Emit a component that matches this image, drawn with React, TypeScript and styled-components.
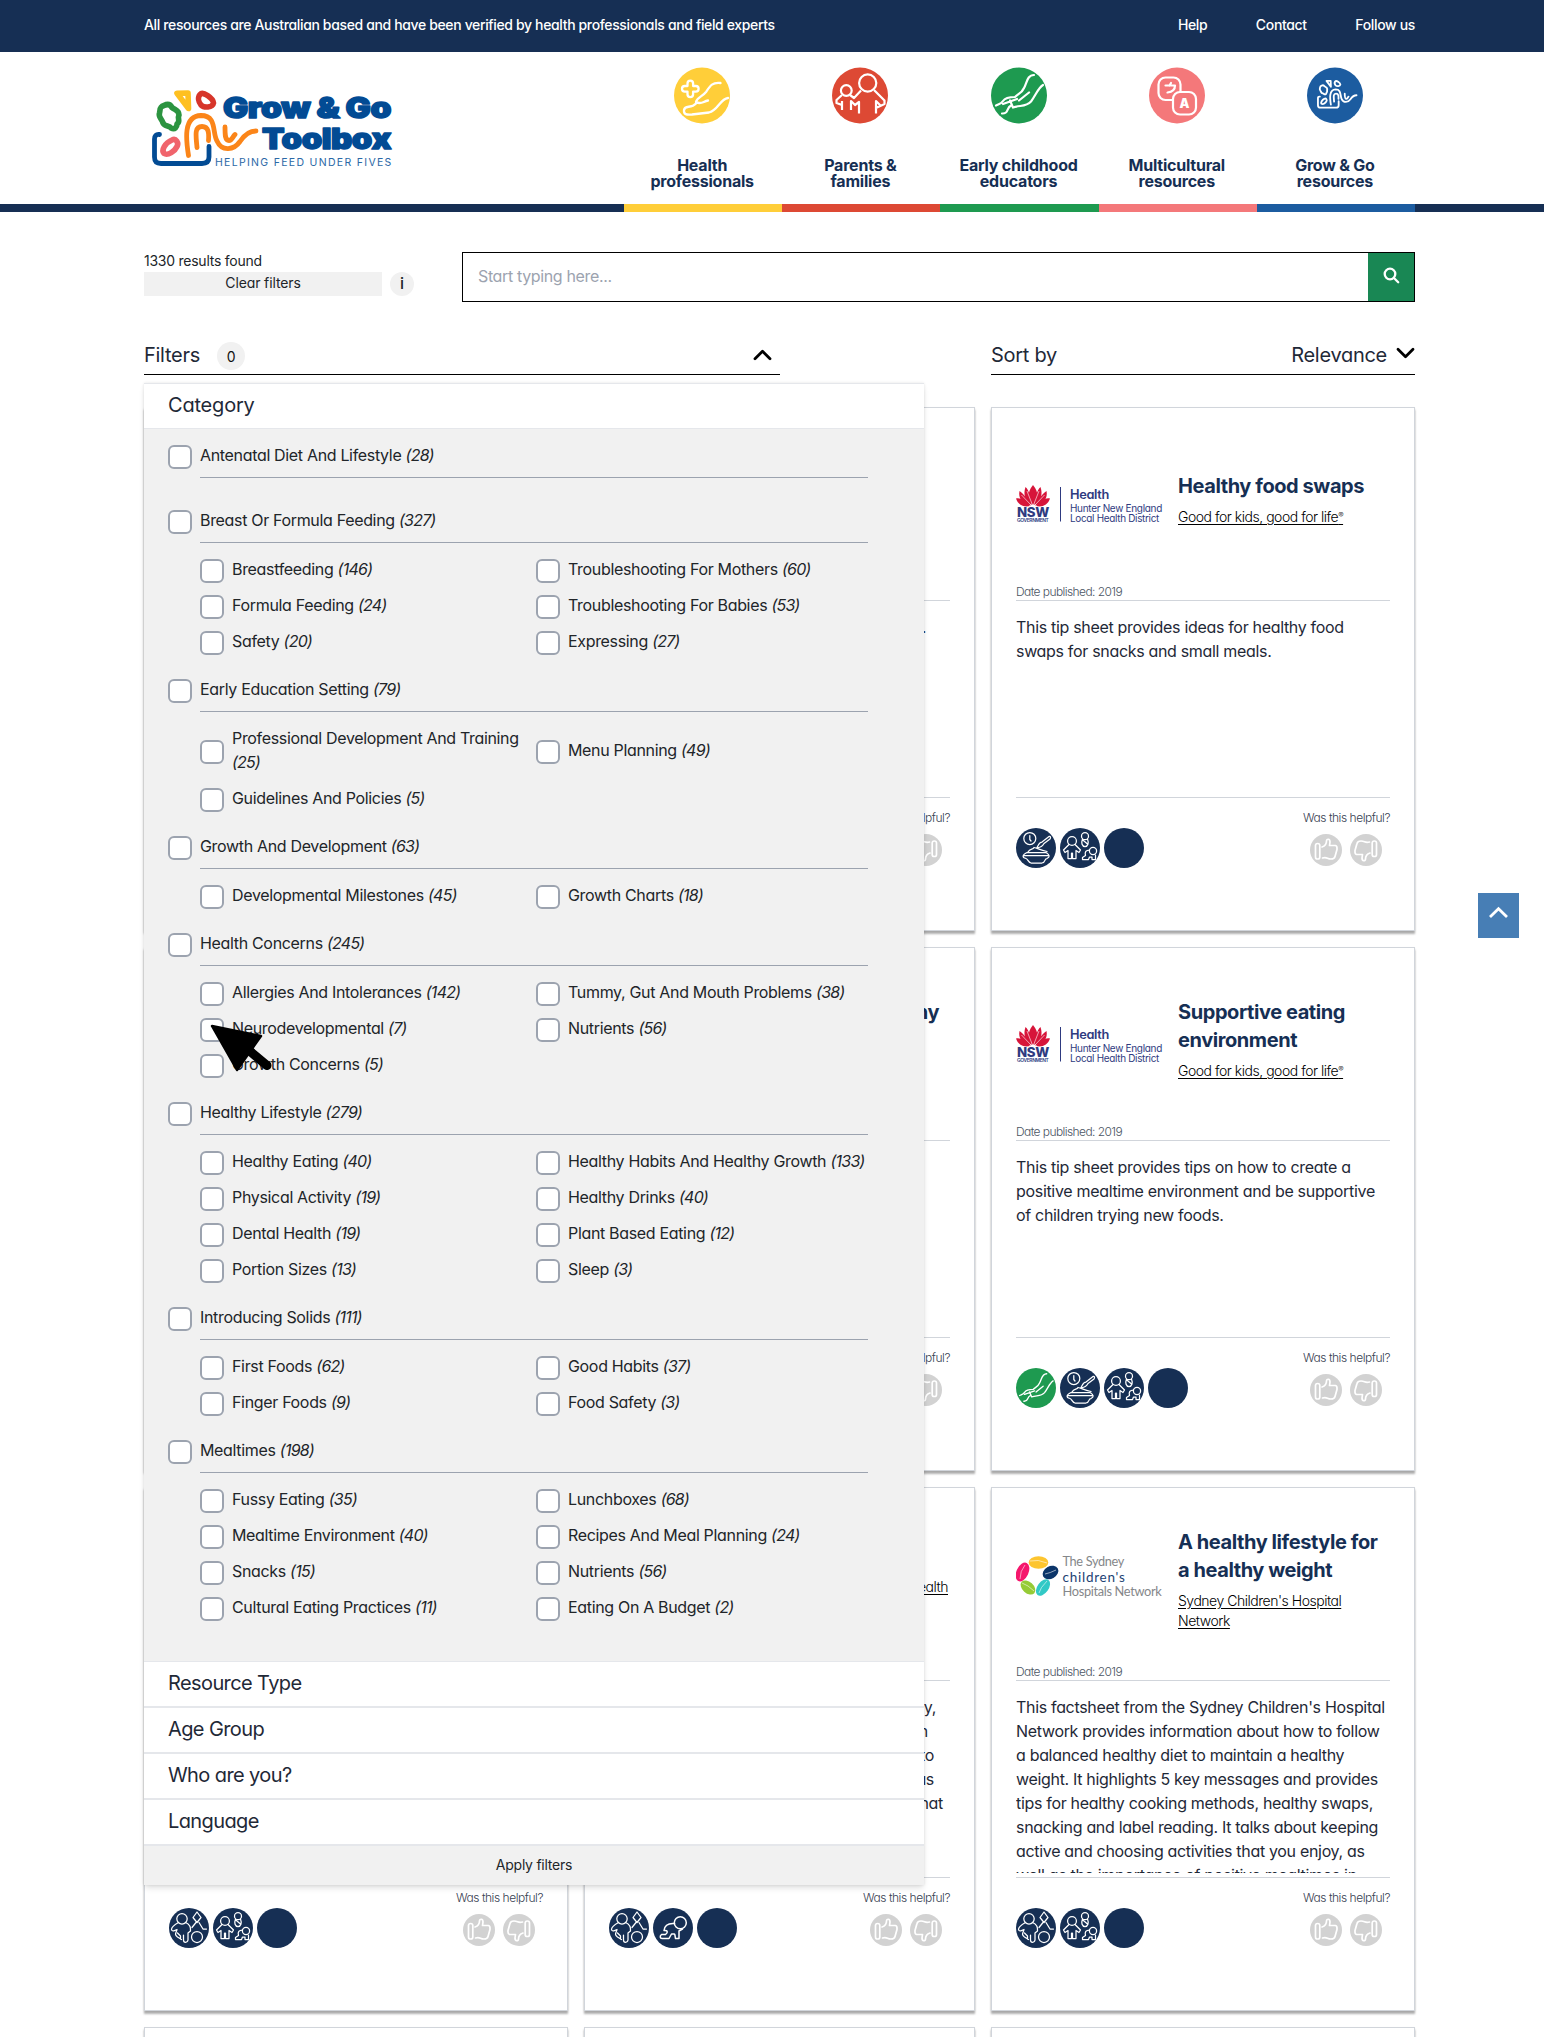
import React from "react";
import styled, { createGlobalStyle, css } from "styled-components";

const navy = "#162f54";
const grey = "#f1f1f1";
const rule = "#9ca3af";

const GlobalStyle = createGlobalStyle`
  *, *::before, *::after { box-sizing: border-box; }
  body { margin: 0; background: #fff; overflow: hidden; }
  button, input { font: inherit; letter-spacing: inherit; color: inherit; font-feature-settings: inherit; }
`;

const Page = styled.div`
  position: relative;
  width: 1544px;
  height: 2037px;
  overflow: hidden;
  background: #fff;
  color: #212529;
  font-family: Inter, "Liberation Sans", sans-serif;
  font-feature-settings: "cv11";
  font-size: 16px;
  line-height: 24px;
  letter-spacing: -0.33px;
`;

const Container = styled.div`
  width: 1271px;
  margin-left: 144px;
`;

/* ---------- top bar ---------- */
const TopBar = styled.div`
  height: 52px;
  background: ${navy};
  color: #fff;
  font-size: 14px;
  font-weight: 500;
`;
const TopBarInner = styled(Container)`
  display: flex;
  justify-content: space-between;
  align-items: center;
  height: 50px;
  letter-spacing: -0.36px;
`;
const TopLinks = styled.nav`
  display: flex;
  gap: 48.5px;
  letter-spacing: -0.34px;
`;

/* ---------- header ---------- */
const Header = styled.header`
  height: 160px;
  box-shadow: inset 0 -8px ${navy};
`;
const HeaderInner = styled(Container)`
  display: flex;
  justify-content: space-between;
  height: 160px;
`;
const LogoLink = styled.a`
  display: block;
  padding: 36px 0 0 6px;
`;
const Nav = styled.nav`
  display: grid;
  grid-template-columns: repeat(5, 158.2px);
`;
const NavItem = styled.a<{ $color: string }>`
  display: flex;
  flex-direction: column;
  align-items: center;
  gap: 33px;
  padding: 15px 2px 0 0;
  border-bottom: 8px solid ${(p) => p.$color};
  color: ${navy};
  font-size: 16px;
  font-weight: 700;
  line-height: 16px;
  letter-spacing: -0.22px;
  text-align: center;
  font-feature-settings: normal;
`;

/* ---------- search ---------- */
const SearchRow = styled.div`
  display: flex;
  justify-content: space-between;
  padding-top: 40px;
  height: 90px;
`;
const Results = styled.div`
  width: 270px;
  font-size: 14px;
  line-height: 18px;
  letter-spacing: -0.25px;
`;
const ClearRow = styled.div`
  display: flex;
  gap: 8px;
  padding-top: 2px;
`;
const ClearButton = styled.button`
  width: 238px;
  height: 24px;
  padding: 0 0 2px;
  border: 0;
  background: ${grey};
  letter-spacing: -0.12px;
`;
const InfoDot = styled.span`
  width: 24px;
  height: 24px;
  border-radius: 50%;
  background: ${grey};
  text-align: center;
  font-size: 16px;
  font-weight: 500;
  line-height: 22px;
`;
const SearchBox = styled.div`
  display: flex;
  width: 953px;
  height: 50px;
  border: 1px solid #000;
`;
const SearchInput = styled.input`
  flex: 1;
  padding: 0 15px 3px;
  border: 0;
  outline: 0;
  background: #fff;
  &::placeholder { color: #9ca3af; opacity: 1; letter-spacing: -0.36px; }
`;
const SearchButton = styled.button`
  display: flex;
  justify-content: center;
  width: 46px;
  padding: 14px 0 0;
  border: 0;
  background: #198754;
`;

/* ---------- filter / sort bars ---------- */
const Bars = styled.div`
  display: flex;
  justify-content: space-between;
  padding-top: 38px;
  color: #1f2937;
  font-size: 20px;
  line-height: 30px;
  letter-spacing: -0.28px;
`;
const Bar = styled.div<{ $width: number }>`
  display: flex;
  align-items: flex-start;
  width: ${(p) => p.$width}px;
  height: 35px;
  border-bottom: 1px solid #000;
`;
const Count = styled.span`
  width: 28px;
  height: 28px;
  margin: 2px auto 0 17px;
  border-radius: 50%;
  background: ${grey};
  color: #111;
  font-size: 14px;
  line-height: 30px;
  text-align: center;
`;
const SortValue = styled.span`
  margin-left: auto;
`;
const Chevron = styled.svg<{ $top: number; $gap: number; $end?: number }>`
  width: 19px;
  height: 12px;
  margin: ${(p) => p.$top}px ${(p) => p.$end ?? 0}px 0 ${(p) => p.$gap}px;
`;

/* ---------- filter panel ---------- */
const Stage = styled.div`
  position: relative;
  padding-top: 32px;
`;
const Panel = styled.section`
  position: absolute;
  z-index: 2;
  top: 8px;
  left: 0;
  width: 780px;
  background: #fff;
  border-top: 1px solid #e5e7eb;
  box-shadow: 0 4px 6px -1px rgba(0, 0, 0, 0.12), 0 0 3px rgba(0, 0, 0, 0.1);
`;
const SectionTitle = styled.div<{ $open?: boolean }>`
  height: ${(p) => (p.$open ? 45 : 46)}px;
  padding-left: 24px;
  border-bottom: ${(p) => (p.$open ? 1 : 2)}px solid #e5e7eb;
  color: #1f2937;
  font-size: 20px;
  line-height: 43px;
  letter-spacing: ${(p) => (p.$open ? -0.2 : -0.6)}px;
`;
const Categories = styled.div`
  padding: 16px 56px 16px 24px;
  background: ${grey};
  border-bottom: 1px solid #e5e7eb;
`;
const Group = styled.div<{ $empty: boolean }>`
  padding-bottom: ${(p) => (p.$empty ? 16 : 12)}px;
`;
const GroupHead = styled.div`
  display: flex;
  gap: 8px;
  height: 33px;
  margin-bottom: 16px;
`;
const GroupLabel = styled.label`
  flex: 1;
  border-bottom: 1px solid ${rule};
  line-height: 20px;
`;
const Options = styled.div`
  display: grid;
  grid-template-columns: 336px 332px;
  margin-left: 32px;
`;
const Option = styled.label`
  display: flex;
  align-items: center;
  gap: 8px;
  padding-bottom: 12px;
`;
const OptionText = styled.span`
  margin: -2px 0 2px;
  max-width: 300px;
`;
const Box = styled.span`
  flex: none;
  width: 24px;
  height: 24px;
  border: 2px solid #9ca3af;
  border-radius: 6px;
  background: #fff;
`;
const Num = styled.em`
  letter-spacing: -0.75px;
`;
const ApplyButton = styled.button`
  display: block;
  width: 100%;
  height: 39px;
  padding: 0 0 1px;
  border: 0;
  background: ${grey};
  font-size: 14px;
  letter-spacing: -0.25px;
`;

/* ---------- cards ---------- */
const CardGrid = styled.div`
  display: grid;
  grid-template-columns: 424px 391px 424px;
  grid-auto-rows: 524px;
  gap: 16px;
`;
const Card = styled.article`
  display: flex;
  flex-direction: column;
  padding: 24px 24px 0;
  border: 1px solid #d1d5db;
  background: #fff;
  box-shadow: 0 3px 2px rgba(0, 0, 0, 0.3), 0 1px 2px rgba(0, 0, 0, 0.08);
`;
const CardHead = styled.div`
  display: flex;
  align-items: center;
  gap: 16px;
  height: 135px;
`;
const LogoSlot = styled.div<{ $drop: number }>`
  flex: none;
  width: 146px;
  padding-top: ${(p) => p.$drop}px;
`;
const TitleBlock = styled.div<{ $tail?: boolean }>`
  flex: 1;
  white-space: pre-line;
  ${(p) =>
    p.$tail &&
    css`
      text-align: right;
    `}
`;
const CardTitle = styled.h3<{ $end?: number }>`
  margin: 0 ${(p) => p.$end ?? 0}px 7px 0;
  min-height: 28px;
  color: ${navy};
  font-size: 20px;
  font-weight: 700;
  line-height: 28px;
  letter-spacing: -0.42px;
  font-feature-settings: normal;
`;
const Org = styled.a<{ $end?: number; $tall?: boolean }>`
  display: block;
  margin-right: ${(p) => p.$end ?? 0}px;
  min-height: ${(p) => (p.$tall ? 40 : 20)}px;
  color: #000;
  font-size: 14px;
  font-weight: 300;
  line-height: 20px;
  letter-spacing: -0.48px;
  text-decoration: underline;
  text-underline-offset: 2px;
`;
const Registered = styled.span`
  font-size: 8px;
  line-height: 0;
  vertical-align: 4px;
`;
const Published = styled.div`
  height: 34px;
  padding-top: 15px;
  border-bottom: 1px solid #d1d5db;
  color: #4b5563;
  font-size: 12px;
  font-weight: 300;
  line-height: 19px;
  letter-spacing: -0.58px;
`;
const Description = styled.div`
  height: 192px;
  margin-bottom: 4px;
  padding-top: 14px;
  overflow: hidden;
  color: #1f2937;
  letter-spacing: -0.32px;
  white-space: pre-line;
`;
const TailLine = styled.div<{ $end: number }>`
  height: 24px;
  padding-right: ${(p) => p.$end}px;
  text-align: right;
`;
const CardFoot = styled.div`
  display: flex;
  justify-content: space-between;
  border-top: 1px solid #d1d5db;
`;
const Audience = styled.div`
  display: flex;
  gap: 4px;
  padding-top: 30px;
`;
const Helpful = styled.div`
  padding-top: 10px;
  color: #374151;
  font-size: 12px;
  font-weight: 300;
  line-height: 20px;
  letter-spacing: -0.46px;
`;
const Votes = styled.div`
  display: flex;
  justify-content: flex-end;
  gap: 8px;
  padding: 6px 8px 0 0;
`;
const Glyph = styled.svg`
  display: block;
  fill: none;
  stroke: #fff;
  stroke-linecap: round;
  stroke-linejoin: round;
`;

/* ---------- overlays ---------- */
const ToTop = styled.button`
  position: absolute;
  top: 893px;
  left: 1478px;
  display: flex;
  justify-content: center;
  width: 41px;
  height: 45px;
  padding: 13px 0 0;
  border: 0;
  background: #477eb5;
`;
const Cursor = styled.svg`
  position: absolute;
  z-index: 3;
  top: 1023px;
  left: 209px;
`;

/* ---------- drawings ---------- */
type MarkColors = { green: string; yellow: string; red: string; pink: string; blue: string; orange: string };
const brand: MarkColors = { green: "#2c9440", yellow: "#fec021", red: "#d7352a", pink: "#f0646c", blue: "#024b94", orange: "#fb8519" };
const white: MarkColors = { green: "#fff", yellow: "#fff", red: "#fff", pink: "#fff", blue: "#fff", orange: "#fff" };

const Mark = ({ c, w, thin }: { c: MarkColors; w: number; thin: number }) => (
  <g fill="none" strokeWidth={w} strokeLinecap="round" strokeLinejoin="round">
    <path stroke={c.green} d="M12 15.500C7 17 8.500 20 7.500 23C6 27 10 29 11 33C13 37 17 35 19 38C23 40 25 37 25 34C29 31 25 29 27 25C27 20 23 20 20 17.500C18 14 15 14 12 15.500Z" />
    <path stroke={c.yellow} d="M25 3.200L36 3L36.500 18.500Z" />
    <path stroke={c.red} d="M48 4.500C51 1 61 8 61.500 13C60.500 18 52 18 49 15C46.500 12 45.500 7.500 48 4.500Z" />
    <path stroke={c.pink} d="M20 50C24 48 27 53 25 56.500C23 61 16 66 12 63.500C9 60 13 53 20 50Z" />
    <path stroke={c.blue} strokeWidth={thin} d="M7.500 44.500C4 44 2.500 46 2.500 49V67C2.500 72 5 73.500 9 73.500H50C55 73.500 57 71 57 67V56.500" />
    <path stroke={c.orange} strokeWidth={thin} d="M36.500 65.500C34 50 31 26 49 25.500C65 25.500 60 42 65 51C70 62 82 60 88 51.500C93 44 98 41 104 41M45 57.500C44 46 42 36.500 50 36.500C57 36.500 57 44 56.500 50.500M73 37C73 45 73 50.500 77 50.500C80 50.500 80.500 47 83 44.500" />
  </g>
);

const SiteLogo = () => (
  <svg width="245" height="80" viewBox="0 0 245 80">
    <g transform="translate(2 2)"><Mark c={brand} w={5.6} thin={4.8} /></g>
    <g fill={brand.blue} stroke={brand.blue} strokeLinejoin="round" strokeWidth="1.500" fontFamily="Inter" fontWeight="900" fontSize="28">
      <text x="73" y="30" textLength="168" lengthAdjust="spacingAndGlyphs">Grow &amp; Go</text>
      <text x="112" y="61" textLength="129" lengthAdjust="spacingAndGlyphs">Toolbox</text>
    </g>
    <text x="65" y="78" fill="#2b68a6" fontFamily="Inter" fontSize="10.500" textLength="176">HELPING FEED UNDER FIVES</text>
  </svg>
);

const HandsLines = () => (
  <path d="M43 8C36 8 36 16 33 21C31 26 27 27 24 30C18 30 14 31 12 34C10 37 8 37 5 38.500M52 18C47 21 45 28 40 34.500C35 40 29 38 22 40.500L19 33.500M38 25.500L28 33.500M12 37L26 32M11 46.500C18 47 15 41 20 38.500" />
);

const NavIcons: Record<string, React.ReactNode> = {
  health: (
    <g strokeWidth="2.300">
      <path d="M13.500 16.500a2.800 2.800 0 0 1 5.600 0V19h2.700a2.800 2.800 0 0 1 0 5.600h-2.700v2.700a2.800 2.800 0 0 1-5.600 0v-2.700h-2.700a2.800 2.800 0 0 1 0-5.600h2.700z" />
      <path d="M46.500 16C38 15 36 19 32 25C28 30 23 30.500 22 35C27 38 29 34.500 34 33.500M22 36.500C17 42 11 37.500 10 43C9.500 48.500 14 47.500 18 47.500L35 45.500C44 43.500 46 32 54 31" />
    </g>
  ),
  parents: (
    <g strokeWidth="2.200" strokeLinecap="butt">
      <circle cx="35.700" cy="16" r="8.600" />
      <circle cx="14.300" cy="23.500" r="5.400" />
      <path d="M10 28L4.500 33V36L10 38M10 34V43M18 28L22 31L29 23.500M19 43V34L23 38L27 35V46.500M42 23L52.500 33.500V37L44 41M44 46.500V34L49 39" />
    </g>
  ),
  hands: <g strokeWidth="2.200"><HandsLines /></g>,
  language: (
    <g strokeWidth="2.200">
      <rect x="9.500" y="10.500" width="22" height="22.500" rx="7" />
      <rect x="24" y="25" width="23" height="22.500" rx="7" fill="#f4787a" />
      <path d="M16.500 18.500H26C26 23 22.500 25 18.500 25.500M22 16L20.500 18.500" />
      <text x="35.300" y="40.700" fill="#fff" stroke="none" fontFamily="Inter" fontWeight="900" fontSize="12.500" textAnchor="middle">A</text>
    </g>
  ),
  grow: <g transform="translate(10 12.700) scale(.38)"><Mark c={white} w={4.8} thin={4.8} /></g>,
};

const NavIcon = ({ name, color }: { name: string; color: string }) => (
  <Glyph width="56" height="57" viewBox="0 0 56 57">
    <circle cx="28" cy="28.500" r="28" fill={color} stroke="none" />
    {NavIcons[name]}
  </Glyph>
);

const Badges: Record<string, React.ReactNode> = {
  hands: <g transform="scale(.714)" strokeWidth="1.900"><HandsLines /></g>,
  meal: (
    <g>
      <circle cx="13.800" cy="10.500" r="6" />
      <path d="M13.800 7.500V11.500L15 13M33 8.500L26 14C23 14 22.500 17 21 19.500C24 20 26.500 18 28 15.500L34 11C35 9.500 34.500 8 33 8.500M12 24C14 20 17 22 18 19.500C22 20.500 24 22 31 23.500M11 24.500H30C34 27 34 29 31 30.500C28 30.500 30 34.500 26 35H15C12 34.500 12 31 10 30.500C6 29.500 6 27 11 24.500ZM8 27.500H32" />
    </g>
  ),
  family: (
    <g>
      <circle cx="12" cy="13" r="4.400" />
      <circle cx="25" cy="8.200" r="3.500" />
      <path d="M22.500 11C21 15 22 18.500 25 18.500S29 15 27.500 11M22.800 12L27.500 16" />
      <circle cx="33" cy="23" r="3.600" />
      <path d="M9 16.500L3.500 22L5 24.500L8 22.500V30.500H11.500V25M15 16.500L20.500 22L19 24.500L16 22.500V30.500H12.500V25M29.500 22C26 22 24.500 24 25.500 27.500L22.500 29.500V31.500H28.500L29.500 29H32V31.500H35.500V27" />
    </g>
  ),
  play: (
    <g>
      <circle cx="13" cy="10.800" r="5.200" />
      <circle cx="28" cy="29" r="5.500" />
      <path d="M28 4L32 9.500L28 14.500L24 9.500ZM27 14.500L23 19.500M30 14.500L34 21H37.500M9.500 14.500C5 17 2.500 19.500 2.500 21.500C3 24 6 22.500 8 21.500C7 25 5 26.500 8.500 29L12.500 31.500M16.500 14.500C20 16 22 19 21.500 23L19 25V32C18.500 35 14.500 35 14.500 32V27M8.500 25L11.500 28V31" />
    </g>
  ),
  crawl: (
    <g strokeWidth="1.500">
      <circle cx="27.300" cy="14.700" r="6" />
      <path d="M21.500 15.500C15 15 11.500 18 11 22.500C14.500 22 15.500 24 12.500 26.500H8.500C6.500 28 7 30.500 9 30.500H16L18.500 26H21C22 25.500 22 28 22.500 30.500H26V23L29.500 21" />
    </g>
  ),
  blank: null,
};

const Badge = ({ name }: { name: string }) => (
  <Glyph width="40" height="40" viewBox="0 0 40 40" strokeWidth="1.250">
    <circle cx="20" cy="20" r="20" fill={name === "hands" ? "#1e9a50" : navy} stroke="none" />
    {Badges[name]}
  </Glyph>
);

const Thumb = ({ down }: { down?: boolean }) => (
  <Glyph width="32" height="32" viewBox="0 0 32 32" strokeWidth="1.700">
    <circle cx="16" cy="16" r="16" fill="#d2d2d2" stroke="none" />
    <g transform={down ? "rotate(180 16 16)" : undefined}>
      <rect x="5.500" y="9.500" width="4.300" height="15.500" rx="2.100" />
      <path d="M12 13C15 12 16.500 10 16.500 7C16.500 4.500 20 4.500 20 8L19.500 11.500H25.500C27.500 12 27 14 27 15.500L25 22.500C24.500 24.500 23 25 21 25C17 25 17 22.500 12.500 24" />
    </g>
  </Glyph>
);

const NswLogo = () => (
  <svg width="148" height="42" viewBox="0 0 148 42" fontFamily="Inter" fill="#2e3a80">
    <g fill="#d7153a">
      <path d="M17 23C11 19 11 10 17 3C23 10 23 19 17 23Z" />
      <path d="M16 23C9 20 7 12 9.500 5C13 8 15 16 16 23ZM18 23C25 20 27 12 24.500 5C21 8 19 16 18 23Z" />
      <path d="M15 23.500C6 22 2 16 3.500 9C8 12 12 18 15 23.500ZM19 23.500C28 22 32 16 30.500 9C26 12 22 18 19 23.500Z" />
      <path d="M14 24C8 25.500 2 23 0 16.500C5 15 10 20 14 24ZM20 24C26 25.500 32 23 34 16.500C29 15 24 20 20 24Z" />
    </g>
    <g stroke="#fff" strokeWidth=".6" fill="none"><path d="M16.500 23L11 9M17.500 23L23 9M15 23L5.500 13M19 23L28.500 13" /></g>
    <text x="1" y="34.500" fontSize="13" fontWeight="800" textLength="32" lengthAdjust="spacingAndGlyphs">NSW</text>
    <text x="1" y="39.600" fontSize="4.500" fontWeight="600" textLength="31.500" lengthAdjust="spacingAndGlyphs">GOVERNMENT</text>
    <path d="M44.500 5V39.500" stroke="#2e3a80" strokeWidth="1" />
    <text x="54" y="17" fontSize="12.500" fontWeight="600" textLength="39" lengthAdjust="spacingAndGlyphs">Health</text>
    <text x="54" y="29.500" fontSize="10.500" textLength="92" lengthAdjust="spacingAndGlyphs">Hunter New England</text>
    <text x="54" y="39.500" fontSize="10.500" textLength="89" lengthAdjust="spacingAndGlyphs">Local Health District</text>
  </svg>
);

const SydneyLogo = () => (
  <svg width="147" height="46" viewBox="0 0 147 46" fontFamily="Lato" fill="#85878a">
    <ellipse cx="22.500" cy="8.500" rx="9.800" ry="6.200" fill="#fdc52f" />
    <ellipse cx="34.500" cy="18.500" rx="8.300" ry="6.200" transform="rotate(-28 34.500 18.500)" fill="#0b3569" />
    <ellipse cx="6.500" cy="18" rx="10" ry="6" transform="rotate(-65 6.500 18)" fill="#f5176c" />
    <ellipse cx="12" cy="33.500" rx="8.500" ry="5.600" transform="rotate(42 12 33.500)" fill="#96cb36" />
    <ellipse cx="27" cy="33.500" rx="9.300" ry="5.600" transform="rotate(-54 27 33.500)" fill="#32c9c6" />
    <path d="M14 7Q22 5 31 9M29 20Q34 19 40 16M4 25Q4 17 9 11M6 29Q12 31 18 37M23 39Q24 34 31 27" fill="none" stroke="#fff" strokeWidth=".7" opacity=".8" />
    <text x="46.500" y="11.500" fontSize="12.500" textLength="61.500" lengthAdjust="spacingAndGlyphs">The Sydney</text>
    <text x="46.500" y="27.500" fontSize="13.500" fill="#1d4273" textLength="62" lengthAdjust="spacing">children's</text>
    <text x="46.500" y="42" fontSize="12.500" textLength="99" lengthAdjust="spacingAndGlyphs">Hospitals Network</text>
  </svg>
);

/* ---------- data ---------- */
const navItems = [
  { name: "health", color: "#ffce39", lines: ["Health", "professionals"] },
  { name: "parents", color: "#dd4934", lines: ["Parents &", "families"] },
  { name: "hands", color: "#1e9a50", lines: ["Early childhood", "educators"] },
  { name: "language", color: "#f4787a", lines: ["Multicultural", "resources"] },
  { name: "grow", color: "#1c5ca0", lines: ["Grow & Go", "resources"] },
];

type Entry = [string, number];
const groups: { head: Entry; items: Entry[] }[] = [
  { head: ["Antenatal Diet And Lifestyle", 28], items: [] },
  {
    head: ["Breast Or Formula Feeding", 327],
    items: [["Breastfeeding", 146], ["Troubleshooting For Mothers", 60], ["Formula Feeding", 24], ["Troubleshooting For Babies", 53], ["Safety", 20], ["Expressing", 27]],
  },
  { head: ["Early Education Setting", 79], items: [["Professional Development And Training", 25], ["Menu Planning", 49], ["Guidelines And Policies", 5]] },
  { head: ["Growth And Development", 63], items: [["Developmental Milestones", 45], ["Growth Charts", 18]] },
  {
    head: ["Health Concerns", 245],
    items: [["Allergies And Intolerances", 142], ["Tummy, Gut And Mouth Problems", 38], ["Neurodevelopmental", 7], ["Nutrients", 56], ["Growth Concerns", 5]],
  },
  {
    head: ["Healthy Lifestyle", 279],
    items: [["Healthy Eating", 40], ["Healthy Habits And Healthy Growth", 133], ["Physical Activity", 19], ["Healthy Drinks", 40], ["Dental Health", 19], ["Plant Based Eating", 12], ["Portion Sizes", 13], ["Sleep", 3]],
  },
  { head: ["Introducing Solids", 111], items: [["First Foods", 62], ["Good Habits", 37], ["Finger Foods", 9], ["Food Safety", 3]] },
  {
    head: ["Mealtimes", 198],
    items: [["Fussy Eating", 35], ["Lunchboxes", 68], ["Mealtime Environment", 40], ["Recipes And Meal Planning", 24], ["Snacks", 15], ["Nutrients", 56], ["Cultural Eating Practices", 11], ["Eating On A Budget", 2]],
  },
];

type Line = [string, number];
type CardData = {
  logo?: React.ReactNode;
  logoDrop?: number;
  title?: string;
  titleEnd?: number;
  org?: React.ReactNode;
  orgEnd?: number;
  orgTall?: boolean;
  date?: string;
  text?: string;
  tail?: Line[];
  badges: string[];
};
const goodForKids = <>Good for kids, good for life<Registered>®</Registered></>;

const cards: CardData[] = [
  { badges: [] },
  { tail: [[".", 24]], badges: [] },
  {
    logo: <NswLogo />, logoDrop: 12, title: "Healthy food swaps", org: goodForKids, date: "2019",
    text: "This tip sheet provides ideas for healthy food\nswaps for snacks and small meals.", badges: ["meal", "family", "blank"],
  },
  { badges: [] },
  { title: "healthy\n\u00a0", titleEnd: 11, badges: [] },
  {
    logo: <NswLogo />, logoDrop: 12, title: "Supportive eating\nenvironment", org: goodForKids, date: "2019",
    text: "This tip sheet provides tips on how to create a\npositive mealtime environment and be supportive\nof children trying new foods.", badges: ["hands", "meal", "family", "blank"],
  },
  { badges: ["play", "family", "blank"] },
  { org: "Health", orgEnd: 2, orgTall: true, tail: [["healthy,", 14], ["in", 22], ["to", 16], ["as", 16], ["that", 7]], badges: ["play", "crawl", "blank"] },
  {
    logo: <SydneyLogo />, title: "A healthy lifestyle for\na healthy weight", org: "Sydney Children's Hospital\nNetwork", date: "2019",
    text: "This factsheet from the Sydney Children's Hospital\nNetwork provides information about how to follow\na balanced healthy diet to maintain a healthy\nweight. It highlights 5 key messages and provides\ntips for healthy cooking methods, healthy swaps,\nsnacking and label reading. It talks about keeping\nactive and choosing activities that you enjoy, as\nwell as the importance of positive mealtimes in",
    badges: ["play", "family", "blank"],
  },
  { badges: [] }, { badges: [] }, { badges: [] },
];

const ResourceCard = ({ data }: { data: CardData }) => (
  <Card>
    <CardHead>
      {data.logo && <LogoSlot $drop={data.logoDrop ?? 0}>{data.logo}</LogoSlot>}
      <TitleBlock $tail={!data.logo}>
        <CardTitle $end={data.titleEnd}>{data.title}</CardTitle>
        <Org $end={data.orgEnd} $tall={data.orgTall}>{data.org}</Org>
      </TitleBlock>
    </CardHead>
    <Published>{data.date && `Date published: ${data.date}`}</Published>
    <Description>
      {data.text}
      {data.tail?.map(([t, end]) => <TailLine key={t} $end={end}>{t}</TailLine>)}
    </Description>
    <CardFoot>
      <Audience>{data.badges.map((b) => <Badge key={b} name={b} />)}</Audience>
      <Helpful>
        Was this helpful?
        <Votes><Thumb /><Thumb down /></Votes>
      </Helpful>
    </CardFoot>
  </Card>
);

const Label = ({ entry: [name, n] }: { entry: Entry }) => <>{name} <Num>({n})</Num></>;

const Caret = ({ up, top, gap, end }: { up?: boolean; top: number; gap: number; end?: number }) => (
  <Chevron $top={top} $gap={gap} $end={end} viewBox="0 0 19 12" fill="none" stroke="#000" strokeWidth="2.800" strokeLinecap="round" strokeLinejoin="round">
    <path d={up ? "M2 9.700L9.500 2.200L17 9.700" : "M2 2.200L9.500 9.700L17 2.200"} />
  </Chevron>
);

export default function App() {
  return (
    <Page>
      <GlobalStyle />
      <TopBar>
        <TopBarInner>
          <span>All resources are Australian based and have been verified by health professionals and field experts</span>
          <TopLinks><span>Help</span><span>Contact</span><span>Follow us</span></TopLinks>
        </TopBarInner>
      </TopBar>
      <Header>
        <HeaderInner>
          <LogoLink><SiteLogo /></LogoLink>
          <Nav>
            {navItems.map((n) => (
              <NavItem key={n.name} $color={n.color}>
                <NavIcon name={n.name} color={n.color} />
                <span>{n.lines[0]}<br />{n.lines[1]}</span>
              </NavItem>
            ))}
          </Nav>
        </HeaderInner>
      </Header>
      <Container>
        <SearchRow>
          <Results>
            1330 results found
            <ClearRow><ClearButton>Clear filters</ClearButton><InfoDot>i</InfoDot></ClearRow>
          </Results>
          <SearchBox>
            <SearchInput placeholder="Start typing here..." />
            <SearchButton aria-label="Search">
              <svg width="17" height="17" viewBox="0 0 17 17" fill="none" stroke="#fff" strokeWidth="2.300" strokeLinecap="round">
                <circle cx="7" cy="7" r="5.300" /><path d="M11.200 11.200L15.200 15.200" />
              </svg>
            </SearchButton>
          </SearchBox>
        </SearchRow>
        <Bars>
          <Bar $width={636}>Filters<Count>0</Count><Caret up top={9} gap={0} end={8} /></Bar>
          <Bar $width={424}>Sort by<SortValue>Relevance</SortValue><Caret top={7} gap={9} /></Bar>
        </Bars>
        <Stage>
          <Panel>
            <SectionTitle $open>Category</SectionTitle>
            <Categories>
              {groups.map((g) => (
                <Group key={g.head[0]} $empty={g.items.length === 0}>
                  <GroupHead><Box /><GroupLabel><Label entry={g.head} /></GroupLabel></GroupHead>
                  <Options>
                    {g.items.map((it) => (
                      <Option key={it[0]}><Box /><OptionText><Label entry={it} /></OptionText></Option>
                    ))}
                  </Options>
                </Group>
              ))}
            </Categories>
            {["Resource Type", "Age Group", "Who are you?", "Language"].map((s) => <SectionTitle key={s}>{s}</SectionTitle>)}
            <ApplyButton>Apply filters</ApplyButton>
          </Panel>
          <CardGrid>{cards.map((c, i) => <ResourceCard key={i} data={c} />)}</CardGrid>
        </Stage>
      </Container>
      <ToTop aria-label="Back to top">
        <svg width="21" height="14" viewBox="0 0 21 14" fill="none" stroke="#fff" strokeWidth="2.800"><path d="M2 11L10.500 2.800L19 11" /></svg>
      </ToTop>
      <Cursor width="66" height="52" viewBox="0 0 66 52">
        <path d="M3 3L52 13L28 47Z" stroke="#000" strokeWidth="2.500" strokeLinejoin="round" />
        <path d="M36 24L58 42.500" stroke="#000" strokeWidth="9" strokeLinecap="round" />
      </Cursor>
    </Page>
  );
}
